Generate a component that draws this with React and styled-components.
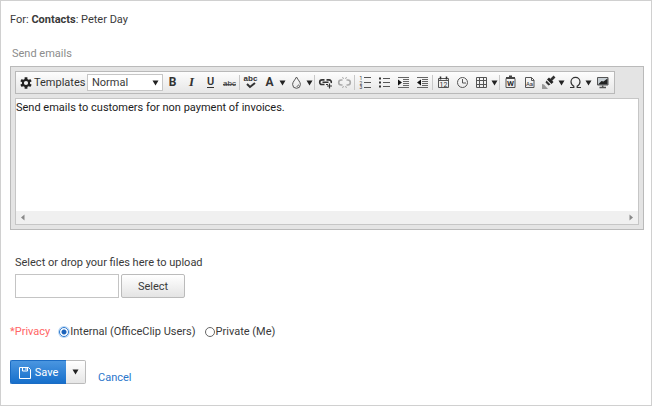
import styled, { createGlobalStyle } from "styled-components";

const GlobalStyle = createGlobalStyle`
  *, *::before, *::after {
    box-sizing: border-box;
  }

  body {
    margin: 0;
    background: #fff;
  }

  body, button, input, select, textarea {
    font-family: Roboto, "Open Sans", sans-serif;
    font-size: 11px;
    line-height: 18px;
    color: #3a3a3a;
  }
`;

const Page = styled.main`
  min-height: 100vh;
  padding: 10px 7px 12px 9px;
  border: 1px solid #d0d0d0;
`;
const Subject = styled.p`
  margin: 0 0 16px;
`;
const FieldLabel = styled.label`
  display: block;
  margin: 0 0 3px 2px;
  color: #8c8c8c;
`;

const Editor = styled.section`
  padding: 4px;
  border: 1px solid #bababa;
  background: #e4e4e4;
`;
const Toolbar = styled.div`
  display: flex;
  align-items: center;
  width: fit-content;
  height: 23px;
  padding: 0 2px 0 4px;
  margin-bottom: 4px;
  border: 1px solid #b9b9b9;
  background: linear-gradient(#fdfdfd, #e6e6e6);
`;
const ToolButton = styled.button`
  display: flex;
  align-items: center;
  justify-content: center;
  gap: 2px;
  flex: none;
  width: ${(props) => (props.$split ? 27 : 19)}px;
  height: 21px;
  padding: 0;
  border: 0;
  background: none;
  color: ${(props) => (props.$muted ? "#aaa" : "#333")};

  svg {
    flex: none;
  }
`;
const TemplatesButton = styled(ToolButton)`
  justify-content: flex-start;
  width: 67px;
`;
const Separator = styled.span`
  flex: none;
  width: 2px;
  height: 15px;
  border-left: 1px solid #c8c8c8;
`;
const FormatBox = styled.span`
  position: relative;
  display: flex;
  align-items: center;
  flex: none;

  svg {
    position: absolute;
    right: 4px;
    pointer-events: none;
  }
`;
const FormatSelect = styled.select`
  width: 76px;
  height: 17px;
  padding: 0 14px 0 4px;
  border: 1px solid #c6c6c6;
  border-radius: 0;
  background: #fff;
  line-height: 15px;
  appearance: none;
`;
const ContentArea = styled.div`
  border: 1px solid #c6c6c6;
  background: #fff;
`;
const Content = styled.textarea`
  display: block;
  width: 100%;
  height: 112px;
  padding: 0;
  border: 0;
  outline: 0;
  resize: none;
  background: #fff;
  color: #1c1c1c;
`;
const ScrollStrip = styled.div`
  display: flex;
  align-items: center;
  justify-content: space-between;
  height: 13px;
  padding: 0 4px;
  background: #f0f0f0;
`;

const Upload = styled.section`
  margin: 24px 0 0 5px;
`;
const UploadLabel = styled.label`
  display: block;
  margin-bottom: 2px;
`;
const UploadRow = styled.div`
  display: flex;
  gap: 2px;
`;
const FileBox = styled.input`
  width: 104px;
  height: 24px;
  padding: 0 4px;
  border: 1px solid #c4c4c4;
  border-radius: 0;
  background: #fff;
`;
const SelectButton = styled.button`
  width: 64px;
  height: 24px;
  padding: 1px 0 0;
  border: 1px solid #bbb;
  border-radius: 2px;
  background: linear-gradient(#fff, #e4e4e4);
`;

const Privacy = styled.div`
  display: flex;
  align-items: center;
  height: 18px;
  margin-top: 25px;
`;
const PrivacyTitle = styled.span`
  margin-right: 9px;
  color: #f66;
`;
const Option = styled.label`
  display: flex;
  align-items: center;
  gap: 1px;
  margin-right: 9px;
`;
const Radio = styled.input`
  width: 10px;
  height: 10px;
  margin: 0;
  border: 1px solid #666;
  border-radius: 50%;
  background: #fff;
  appearance: none;

  &:checked {
    border-color: #2b78cf;
    background: radial-gradient(circle, #1b62ba 0 2px, #fff 3px);
    box-shadow: 0 0 0 1px #bcd9f5;
  }
`;

const Actions = styled.div`
  display: flex;
  align-items: flex-start;
  margin-top: 19px;
`;
const SaveButton = styled.button`
  display: flex;
  align-items: center;
  justify-content: center;
  gap: 4px;
  width: 56px;
  height: 24px;
  padding: 1px 0 0;
  border: 1px solid #1b6cc4;
  border-right: 0;
  border-radius: 2px 0 0 2px;
  background: linear-gradient(#4a96e0, #176fcb);
  color: #fff;
`;
const SaveMenuButton = styled.button`
  display: flex;
  align-items: center;
  justify-content: center;
  width: 20px;
  height: 24px;
  padding: 0;
  border: 1px solid #bbb;
  border-left: 0;
  border-radius: 0 2px 2px 0;
  background: linear-gradient(#fff, #e6e6e6);
`;
const CancelLink = styled.a`
  margin: 9px 0 0 12px;
  color: #2a76cb;
  text-decoration: none;
`;

function Icon({ children }) {
  return (
    <svg
      width="15"
      height="15"
      viewBox="0 0 15 15"
      fill="none"
      stroke="currentColor"
      aria-hidden="true"
    >
      {children}
    </svg>
  );
}

function Glyph({ children, size = 11, x = 7.5, y = 11, ...rest }) {
  return (
    <text
      x={x}
      y={y}
      fontSize={size}
      fill="currentColor"
      stroke="none"
      textAnchor="middle"
      {...rest}
    >
      {children}
    </text>
  );
}

function Arrow() {
  return (
    <svg width="7" height="6" viewBox="0 0 7 6" aria-hidden="true">
      <path d="M.5 .5h6L3.5 5.5z" fill="#222" />
    </svg>
  );
}

function Tool({ label, split, muted, children }) {
  return (
    <ToolButton
      type="button"
      title={label}
      aria-label={label}
      $split={split}
      $muted={muted}
    >
      <Icon>{children}</Icon>
      {split && <Arrow />}
    </ToolButton>
  );
}

function EditorToolbar() {
  return (
    <Toolbar role="toolbar" aria-label="Formatting">
      <TemplatesButton type="button">
        <svg width="12" height="12" viewBox="1 1 12 12" aria-hidden="true">
          <path d="M7 1.2v11.6M2 4.1l10 5.8M2 9.9l10-5.8" stroke="#222" strokeWidth="2.8" />
          <circle cx="7" cy="7" r="3.1" fill="#f4f4f4" stroke="#222" strokeWidth="2" />
        </svg>
        Templates
      </TemplatesButton>
      <FormatBox>
        <FormatSelect aria-label="Paragraph style" defaultValue="Normal">
          <option>Normal</option>
        </FormatSelect>
        <Arrow />
      </FormatBox>

      <Tool label="Bold">
        <Glyph fontWeight="700" size={12}>B</Glyph>
      </Tool>
      <Tool label="Italic">
        <Glyph fontWeight="700" fontStyle="italic" fontFamily="Liberation Serif, serif" size={13}>I</Glyph>
      </Tool>
      <Tool label="Underline">
        <Glyph fontWeight="600" y={10}>U</Glyph>
        <path d="M4 12.5h7" />
      </Tool>
      <Tool label="Strikethrough">
        <Glyph size={8} fontFamily="Liberation Sans, sans-serif">abc</Glyph>
        <path d="M1 9.5h13" strokeWidth=".8" />
      </Tool>
      <Separator />
      <Tool label="Check spelling">
        <Glyph size={8} y={6} fontWeight="600" fontFamily="Liberation Sans, sans-serif">abc</Glyph>
        <path d="M4 9l3 3 5-4" strokeWidth="2" />
      </Tool>
      <Tool label="Text color" split>
        <Glyph fontWeight="700" size={12}>A</Glyph>
      </Tool>
      <Tool label="Background color" split>
        <path d="M7.5 2C6 5 3.6 7 3.6 9.4a3.9 3.9 0 0 0 7.8 0C11.4 7 9 5 7.5 2z" stroke="#555" />
        <path d="M9.5 9.5a2 2 0 0 1-2 2" stroke="#777" />
      </Tool>
      <Separator />
      <Tool label="Insert link">
        <path d="M6.5 9.5H4a2.3 2.3 0 0 1 0-4.6h2.5M8.5 4.9H11a2.3 2.3 0 0 1 2.2 3M4.5 7.2h6" strokeWidth="1.6" />
        <path d="M11.5 8.5v5M9 11h5M8 9.5h2" strokeWidth="1.2" />
      </Tool>
      <Tool label="Remove link" muted>
        <path d="M5.5 10H4.2a2.5 2.5 0 0 1 0-5h1.3M9.5 5h1.3a2.5 2.5 0 0 1 0 5H9.5" strokeWidth="1.6" />
        <path d="M5.5 2l1 2M9.5 2l-1 2M5.5 13l1-2M9.5 13l-1-2" />
      </Tool>
      <Separator />
      <Tool label="Numbered list">
        <path d="M6 2.5h7M6 7.5h7M6 12.5h7" stroke="#555" />
        <Glyph x={3} y={5} size={5}>1</Glyph>
        <Glyph x={3} y={9.5} size={5}>2</Glyph>
        <Glyph x={3} y={14} size={5}>3</Glyph>
      </Tool>
      <Tool label="Bulleted list">
        <path d="M6 3.5h7M6 7.5h7M6 11.5h7" stroke="#555" />
        <path d="M2 3.5h2M2 7.5h2M2 11.5h2" strokeWidth="2" />
      </Tool>
      <Tool label="Indent">
        <path d="M2 2.5h11M7 4.5h6M7 6.5h6M7 8.5h6M7 10.5h6M2 12.5h11" stroke="#666" />
        <path d="M2 4.5v6l4-3z" fill="#111" stroke="none" />
      </Tool>
      <Tool label="Outdent">
        <path d="M2 2.5h11M7 4.5h6M7 6.5h6M7 8.5h6M7 10.5h6M2 12.5h11" stroke="#666" />
        <path d="M6 4.5v6l-4-3z" fill="#111" stroke="none" />
      </Tool>
      <Separator />
      <Tool label="Insert date">
        <path d="M2.5 3.5h10v9h-10zM2.5 5.5h10" stroke="#555" />
        <path d="M4.5 1.5v3M10.5 1.5v3" strokeWidth="1.5" />
        <Glyph y={12} size={7}>12</Glyph>
      </Tool>
      <Tool label="Insert time">
        <circle cx="7.5" cy="7.5" r="5" stroke="#555" />
        <path d="M7.5 4v4H11" stroke="#555" />
      </Tool>
      <Tool label="Insert table" split>
        <path d="M2.5 2.5h10v10h-10zM2.5 5.5h10M2.5 9.5h10M5.5 2.5v10M9.5 2.5v10" stroke="#555" />
      </Tool>
      <Separator />
      <Tool label="Paste from Word">
        <path d="M3 3.5h9v9H3z" stroke="#555" />
        <path d="M3 3h9M6 1.5h3" stroke="#444" strokeWidth="2" />
        <Glyph y={11} size={8} fontWeight="700">W</Glyph>
      </Tool>
      <Tool label="Paste plain text">
        <path d="M3.5 2.5h6l2.5 2.500v7.500h-8.500zM9.500 2.500v3h2.500" stroke="#555" />
        <Glyph y={11} size={6}>Aa</Glyph>
      </Tool>
      <Tool label="Format stripper" split>
        <path d="M13.5 1.5L10 5" strokeWidth="2.6" />
        <path d="M6 4.5L8 2.5l4.5 4.5-2 2z" fill="#222" stroke="none" />
        <path d="M5.5 5.5L9.5 9.5 7.5 10.5 4.5 7.5z" fill="#333" stroke="none" />
        <path d="M1 9l2 .5 4 4.5H1z" fill="#999" stroke="none" />
      </Tool>
      <Tool label="Insert symbol" split>
        <path d="M2 12.5h3.8v-1.3C4.2 10.3 3 8.8 3 6.8a4.5 4.5 0 0 1 9 0c0 2-1.2 3.5-2.8 4.4v1.3H13" strokeWidth="1.2" />
      </Tool>
      <Tool label="Full screen">
        <path d="M2.5 2.5h10.5v7.5h-10.5z" fill="#c6ced3" stroke="#555" />
        <path d="M3 9.5L6.5 6l2 .5 4-3v6z" fill="#222" stroke="none" />
        <path d="M4.5 12.5h6.5M7.7 10.5v2" stroke="#555" strokeWidth="1.5" />
      </Tool>
    </Toolbar>
  );
}

function App() {
  return (
    <>
      <GlobalStyle />
      <Page>
        <Subject>
          For: <strong>Contacts</strong>: Peter Day
        </Subject>

        <FieldLabel htmlFor="message">Send emails</FieldLabel>
        <Editor>
          <EditorToolbar />
          <ContentArea>
            <Content
              id="message"
              defaultValue="Send emails to customers for non payment of invoices."
            />
            <ScrollStrip aria-hidden="true">
              <svg width="5" height="7" viewBox="0 0 5 7">
                <path d="M4.5 .5v6L1 3.5z" fill="#888" />
              </svg>
              <svg width="5" height="7" viewBox="0 0 5 7">
                <path d="M.5 .5v6L4 3.5z" fill="#888" />
              </svg>
            </ScrollStrip>
          </ContentArea>
        </Editor>

        <Upload>
          <UploadLabel htmlFor="files">
            Select or drop your files here to upload
          </UploadLabel>
          <UploadRow>
            <FileBox id="files" type="text" />
            <SelectButton type="button">Select</SelectButton>
          </UploadRow>
        </Upload>

        <Privacy role="radiogroup" aria-labelledby="privacy">
          <PrivacyTitle id="privacy">*Privacy</PrivacyTitle>
          <Option>
            <Radio type="radio" name="privacy" defaultChecked />
            Internal (OfficeClip Users)
          </Option>
          <Option>
            <Radio type="radio" name="privacy" />
            Private (Me)
          </Option>
        </Privacy>

        <Actions>
          <SaveButton type="submit">
            <svg width="12" height="12" viewBox="0 0 12 12" fill="none" stroke="#fff" aria-hidden="true">
              <path d="M.5 .5h9l2 2v9H.5z" />
              <path d="M3.5 .5V4h5V.5M7 1v2" />
            </svg>
            Save
          </SaveButton>
          <SaveMenuButton type="button" aria-label="More save options">
            <Arrow />
          </SaveMenuButton>
          <CancelLink href="#cancel">Cancel</CancelLink>
        </Actions>
      </Page>
    </>
  );
}

export default App;
